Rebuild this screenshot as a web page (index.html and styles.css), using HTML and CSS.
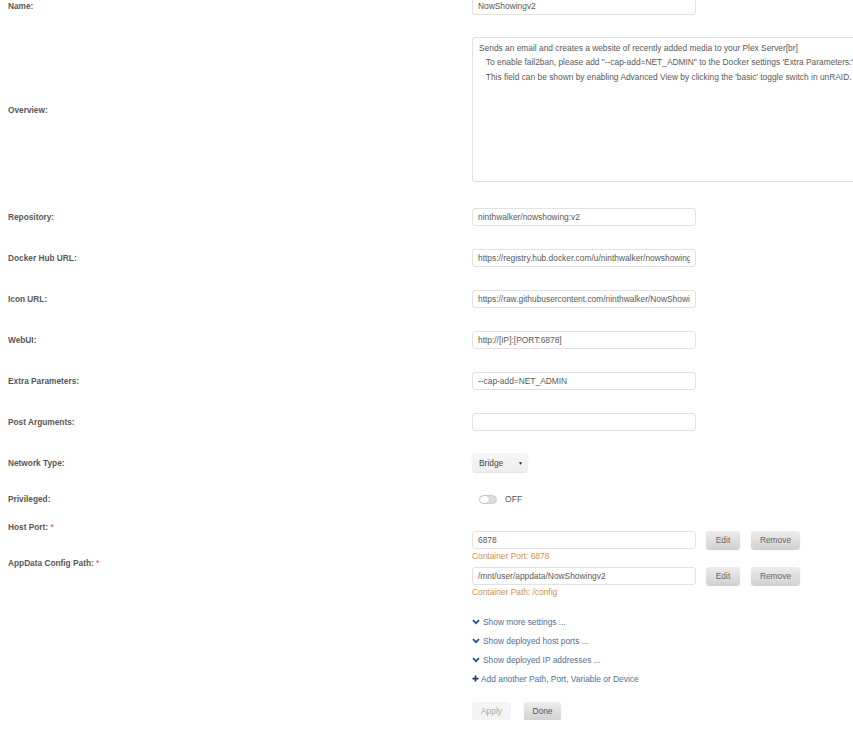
FILE: index.html
```html
<!DOCTYPE html>
<html lang="en">
<head>
  <meta charset="UTF-8" />
  <title>Add Container — NowShowingv2</title>
  <link rel="stylesheet" href="styles.css">
</head>
<body>
  <form class="form">
    <div class="row row-name">
      <div class="label">Name:</div>
      <input class="input" type="text" value="NowShowingv2" />
    </div>

    <div class="row row-overview">
      <div class="label">Overview:</div>
      <textarea class="overview" wrap="off" readonly>Sends an email and creates a website of recently added media to your Plex Server[br]
   To enable fail2ban, please add "--cap-add=NET_ADMIN" to the Docker settings 'Extra Parameters:'
   This field can be shown by enabling Advanced View by clicking the 'basic' toggle switch in unRAID.</textarea>
    </div>

    <div class="row">
      <div class="label">Repository:</div>
      <input class="input" type="text" value="ninthwalker/nowshowing:v2" />
    </div>

    <div class="row">
      <div class="label">Docker Hub URL:</div>
      <input class="input" type="text" value="https://registry.hub.docker.com/u/ninthwalker/nowshowing/" />
    </div>

    <div class="row">
      <div class="label">Icon URL:</div>
      <input class="input" type="text" value="https://raw.githubusercontent.com/ninthwalker/NowShowing/master/logo.png" />
    </div>

    <div class="row">
      <div class="label">WebUI:</div>
      <input class="input" type="text" value="http://[IP]:[PORT:6878]" />
    </div>

    <div class="row">
      <div class="label">Extra Parameters:</div>
      <input class="input" type="text" value="--cap-add=NET_ADMIN" />
    </div>

    <div class="row row-post">
      <div class="label">Post Arguments:</div>
      <input class="input" type="text" value="" />
    </div>

    <div class="row row-network">
      <div class="label">Network Type:</div>
      <div class="select">
        <span>Bridge</span>
        <span class="caret">&#9660;</span>
      </div>
    </div>

    <div class="row row-privileged">
      <div class="label">Privileged:</div>
      <div class="switch">
        <span class="track"><span class="knob"></span></span>
        <span class="switch-text">OFF</span>
      </div>
    </div>

    <div class="row row-config">
      <div class="label">Host Port: <span class="req">*</span></div>
      <div class="field">
        <div class="line">
          <input class="input" type="text" value="6878" />
          <button type="button" class="btn btn-edit">Edit</button>
          <button type="button" class="btn btn-remove">Remove</button>
        </div>
        <div class="hint">Container Port: 6878</div>
      </div>
    </div>

    <div class="row row-config">
      <div class="label">AppData Config Path: <span class="req">*</span></div>
      <div class="field">
        <div class="line">
          <input class="input" type="text" value="/mnt/user/appdata/NowShowingv2" />
          <button type="button" class="btn btn-edit">Edit</button>
          <button type="button" class="btn btn-remove">Remove</button>
        </div>
        <div class="hint">Container Path: /config</div>
      </div>
    </div>

    <div class="links">
      <div class="link">
        <svg class="chev" viewBox="0 0 10 7" width="8" height="6"><polyline points="1.2,1.3 5,5 8.8,1.3" fill="none" stroke="#24508f" stroke-width="2.2"/></svg>
        Show more settings ...
      </div>
      <div class="link">
        <svg class="chev" viewBox="0 0 10 7" width="8" height="6"><polyline points="1.2,1.3 5,5 8.8,1.3" fill="none" stroke="#24508f" stroke-width="2.2"/></svg>
        Show deployed host ports ...
      </div>
      <div class="link">
        <svg class="chev" viewBox="0 0 10 7" width="8" height="6"><polyline points="1.2,1.3 5,5 8.8,1.3" fill="none" stroke="#24508f" stroke-width="2.2"/></svg>
        Show deployed IP addresses ...
      </div>
      <div class="link link-add">
        <svg class="plus" viewBox="0 0 8 8" width="7" height="7"><path d="M4 0.5V7.5M0.5 4H7.5" stroke="#1f3b63" stroke-width="2"/></svg>
        Add another Path, Port, Variable or Device
      </div>
    </div>

    <div class="actions">
      <button type="button" class="btn btn-apply" disabled>Apply</button>
      <button type="button" class="btn btn-done">Done</button>
    </div>
  </form>
</body>
</html>
```

FILE: styles.css
```css
* {
  box-sizing: border-box;
}

html, body {
  overflow: hidden;
}

body {
  margin: 0;
  padding: 0 0 0 8px;
  background: #fff;
  font-family: "Liberation Sans", Arial, sans-serif;
  color: #555;
}

.form {
  margin-top: -3px;
}

.row {
  display: flex;
  align-items: center;
  margin-bottom: 23px;
}

.row-name { margin-bottom: 22px; }
.row-overview { margin-bottom: 26px; }
.row-post { margin-bottom: 22px; }
.row-network { margin-bottom: 22px; }
.row-privileged { margin-bottom: 27px; }

.label {
  width: 464px;
  flex: none;
  font-size: 8.3px;
  line-height: 10px;
  font-weight: bold;
  color: #585858;
}

.req {
  color: #e03a3a;
  font-weight: normal;
}

.input {
  display: block;
  width: 224px;
  height: 18px;
  margin: 0;
  padding: 0 5px;
  border: 1px solid #e2e2e2;
  border-radius: 3px;
  background: #fff;
  font-family: "Liberation Sans", Arial, sans-serif;
  font-size: 8.4px;
  color: #5a5a5a;
  outline: none;
}

/* runs on past the right edge of the window, so no right border */
.overview {
  display: block;
  flex: none;
  width: 381px;
  height: 145px;
  margin: 0;
  padding: 3px 6px;
  border: 1px solid #e2e2e2;
  border-right: none;
  border-radius: 3px 0 0 3px;
  font-family: "Liberation Sans", Arial, sans-serif;
  font-size: 8.4px;
  line-height: 14.3px;
  color: #5a5a5a;
  resize: none;
  overflow: hidden;
  white-space: pre;
  outline: none;
}

/* network type */
.select {
  display: flex;
  align-items: center;
  justify-content: space-between;
  width: 56px;
  height: 19px;
  padding: 0 5px 0 7px;
  border-radius: 3px;
  background: linear-gradient(#f6f6f6, #eeeeee);
  box-shadow: 0 1px 1px rgba(0, 0, 0, 0.12);
  font-size: 8.4px;
  color: #444;
}

.caret {
  font-size: 5px;
  color: #222;
}

/* privileged switch */
.switch {
  display: flex;
  align-items: center;
  height: 10px;
  padding-left: 7px;
}

.track {
  position: relative;
  width: 18px;
  height: 9px;
  border-radius: 5px;
  background: #dcdcdc;
  border: 1px solid #cdcdcd;
}

.knob {
  position: absolute;
  left: 0;
  top: 0;
  width: 9px;
  height: 7px;
  border-radius: 4px;
  background: #fff;
  box-shadow: 0 0 1px rgba(0, 0, 0, 0.3);
}

.switch-text {
  margin-left: 8px;
  font-size: 8.6px;
  color: #555;
}

/* path / port rows */
.row-config {
  align-items: flex-start;
  margin-bottom: 4px;
}

.row-config .label {
  margin-top: -9px;
}

.line {
  display: flex;
  align-items: center;
}

.hint {
  height: 14px;
  line-height: 14px;
  font-size: 8.4px;
  color: #d9913d;
}

.btn {
  height: 18px;
  margin: 0;
  padding: 0;
  border: none;
  border-radius: 3px;
  background: linear-gradient(#ededed, #d2d2d2);
  box-shadow: 0 1px 1px rgba(0, 0, 0, 0.2);
  font-family: "Liberation Sans", Arial, sans-serif;
  font-size: 8.4px;
  color: #666;
  cursor: pointer;
}

.btn-edit {
  width: 34px;
  margin-left: 10px;
}

.btn-remove {
  width: 49px;
  margin-left: 11px;
}

/* links */
.links {
  margin: 13px 0 0 464px;
}

.link {
  display: flex;
  align-items: center;
  height: 19px;
  font-size: 8.4px;
  color: #52709c;
}

.chev {
  margin-right: 3px;
}

.plus {
  margin-right: 2px;
}

/* bottom buttons */
.actions {
  display: flex;
  margin: 14px 0 0 464px;
}

.btn-apply {
  width: 39px;
  background: #f4f4f4;
  box-shadow: none;
  color: #aaa;
  cursor: default;
}

.btn-done {
  width: 37px;
  margin-left: 13px;
  color: #555;
}
```
